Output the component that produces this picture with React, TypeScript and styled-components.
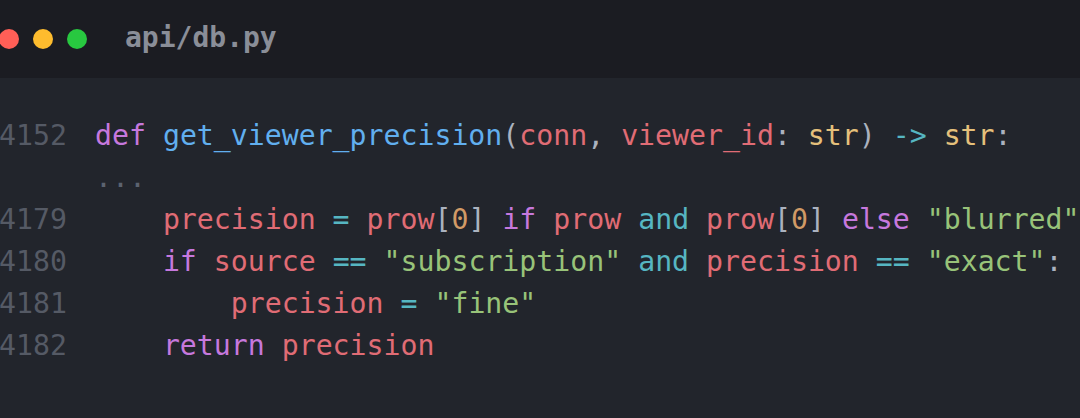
import React from "react";
import styled, { createGlobalStyle } from "styled-components";

const Global = createGlobalStyle`
  html, body { margin: 0; padding: 0; background: #22252c; }
  body { width: 1080px; height: 418px; overflow: hidden; }
`;

const mono = `"DejaVu Sans Mono", "Liberation Mono", monospace`;

const Window = styled.div`
  width: 1080px;
  height: 418px;
  background: #22252c;
  display: flex;
  flex-direction: column;
  overflow: hidden;
`;

const Header = styled.div`
  height: 78px;
  background: #1b1c22;
  display: flex;
  align-items: center;
  padding-left: 0;
  margin-left: -1px;
  flex-shrink: 0;
`;

const Lights = styled.div`
  display: flex;
  gap: 14px;
  align-items: center;
  margin-right: 38px;
`;

const Light = styled.span<{ $c: string }>`
  width: 20px;
  height: 20px;
  border-radius: 50%;
  background: ${(p) => p.$c};
  display: block;
`;

const Title = styled.div`
  font-family: ${mono};
  font-weight: bold;
  font-size: 28px;
  color: #8a8e98;
  line-height: 1;
  margin-top: -2px;
`;

const Body = styled.div`
  padding-top: 36px;
  display: flex;
  flex-direction: column;
  margin-left: -1px;
`;

const Line = styled.div`
  display: flex;
  height: 42px;
  align-items: center;
  font-family: ${mono};
  font-size: 28.2px;
  white-space: pre;
`;

const Num = styled.span`
  width: 68px;
  text-align: right;
  color: #555a65;
  margin-right: 28px;
  flex-shrink: 0;
`;

const Code = styled.span`
  color: #abb2bf;
`;

const colors: Record<string, string> = {
  k: "#c678dd",
  f: "#61afef",
  v: "#e06c75",
  t: "#e5c07b",
  o: "#56b6c2",
  s: "#98c379",
  n: "#d19a66",
  p: "#abb2bf",
  c: "#5c6370",
};

const Tok = styled.span<{ $k: string }>`
  color: ${(p) => colors[p.$k]};
`;

type T = [string, string];
const lines: { n: string; toks: T[] }[] = [
  {
    n: "4152",
    toks: [
      ["k", "def"], ["p", " "], ["f", "get_viewer_precision"], ["p", "("],
      ["v", "conn"], ["p", ", "], ["v", "viewer_id"], ["p", ": "], ["t", "str"],
      ["p", ") "], ["o", "->"], ["p", " "], ["t", "str"], ["p", ":"],
    ],
  },
  { n: "", toks: [["c", "..."]] },
  {
    n: "4179",
    toks: [
      ["p", "    "], ["v", "precision"], ["p", " "], ["o", "="], ["p", " "],
      ["v", "prow"], ["p", "["], ["n", "0"], ["p", "] "], ["k", "if"], ["p", " "],
      ["v", "prow"], ["p", " "], ["o", "and"], ["p", " "], ["v", "prow"], ["p", "["],
      ["n", "0"], ["p", "] "], ["k", "else"], ["p", " "], ["s", "\"blurred\""],
    ],
  },
  {
    n: "4180",
    toks: [
      ["p", "    "], ["k", "if"], ["p", " "], ["v", "source"], ["p", " "], ["o", "=="],
      ["p", " "], ["s", "\"subscription\""], ["p", " "], ["o", "and"], ["p", " "],
      ["v", "precision"], ["p", " "], ["o", "=="], ["p", " "], ["s", "\"exact\""], ["p", ":"],
    ],
  },
  {
    n: "4181",
    toks: [
      ["p", "        "], ["v", "precision"], ["p", " "], ["o", "="], ["p", " "], ["s", "\"fine\""],
    ],
  },
  {
    n: "4182",
    toks: [["p", "    "], ["k", "return"], ["p", " "], ["v", "precision"]],
  },
];

export default function App() {
  return (
    <>
      <Global />
      <Window>
        <Header>
          <Lights>
            <Light $c="#ff5f57" />
            <Light $c="#febc2e" />
            <Light $c="#28c840" />
          </Lights>
          <Title>api/db.py</Title>
        </Header>
        <Body>
          {lines.map((l, i) => (
            <Line key={i}>
              <Num>{l.n}</Num>
              <Code>
                {l.toks.map(([k, t], j) => (
                  <Tok key={j} $k={k}>{t}</Tok>
                ))}
              </Code>
            </Line>
          ))}
        </Body>
      </Window>
    </>
  );
}
